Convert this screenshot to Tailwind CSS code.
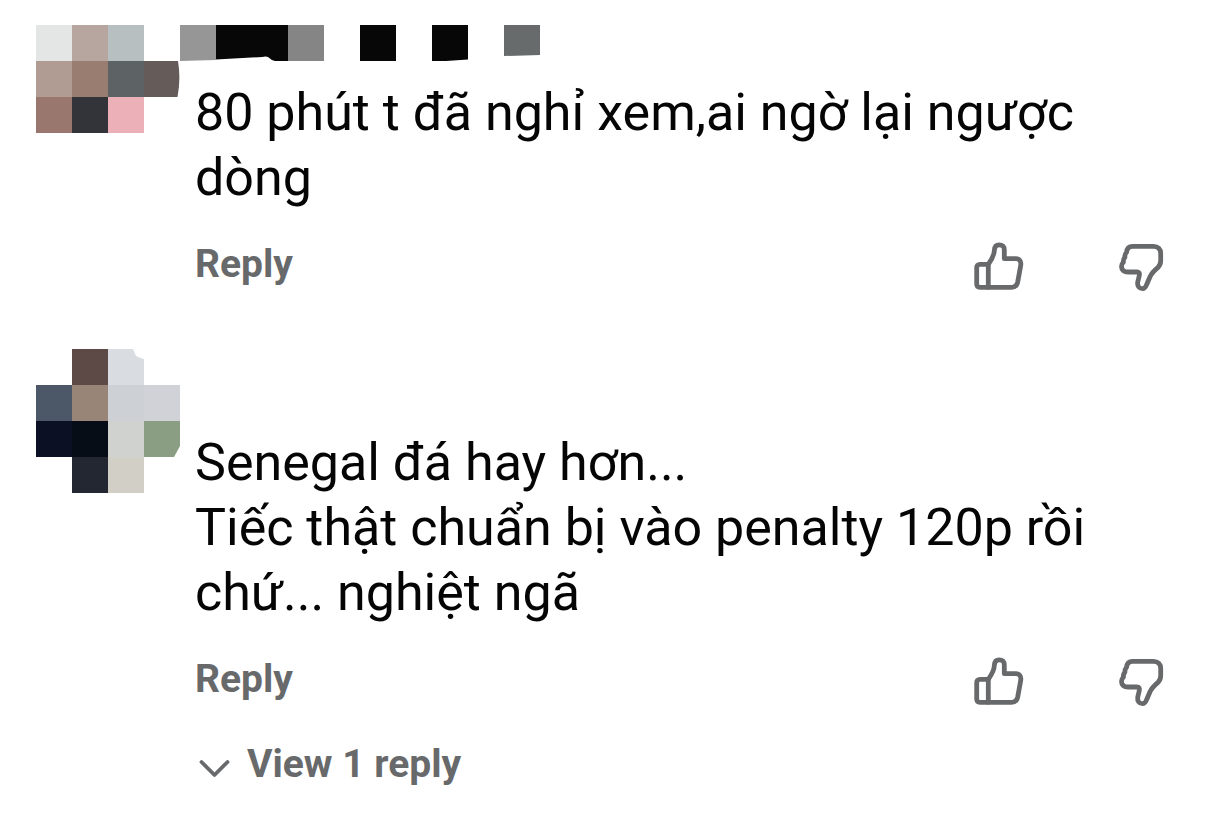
<!DOCTYPE html>
<html lang="vi">
<head>
  <meta charset="UTF-8" />
  <meta name="viewport" content="width=device-width, initial-scale=1" />
  <title>Comments</title>
  <script src="https://cdn.jsdelivr.net/npm/@tailwindcss/browser@4"></script>
</head>
<body class="bg-white font-['Roboto',sans-serif] text-[#050505]">
  <!-- shared icons -->
  <svg class="hidden">
    <symbol id="thumb-up" viewBox="0 0 52 52">
      <g fill="none" stroke="#67696b" stroke-width="4.8" stroke-linejoin="round" stroke-linecap="round">
        <path d="M16.3 23.3H8Q4.7 23.3 4.7 26.6V43Q4.7 46.3 8 46.3H39.5C43 46.3 45 44.3 45.7 41L48.7 24.500C49.400 20.500 47.500 17.700 44 17.700H32.300V9C32.300 5.500 30.300 3.800 27.200 3.800C24 3.800 22.600 5.800 22.400 9C22.200 15 19.800 18.500 16.300 23.300Z" />
        <path d="M16.3 23.3V46.3" />
      </g>
    </symbol>
    <symbol id="thumb-down" viewBox="0 0 52 52">
      <path fill="none" stroke="#67696b" stroke-width="4.8" stroke-linejoin="round" stroke-linecap="round" d="M16.500 5.300H37.500C42 5.300 44.700 8 44.700 12.500V19.500C44.700 22.500 44 24.600 42 26.400C38.500 29.400 35.800 32 34 35.700L30.700 43.500C29.500 46.600 28.400 47.700 26.500 47.700C23.200 47.700 21.200 45 21.700 41.200L23.300 34.500C23.800 32.200 23 31 21 31H12C8 31 5.500 29 5.500 25.500C5.500 23.800 6 22.500 7.400 21.300C7.200 19 7.600 17.500 8.900 16.200C8.700 14 9.300 12.600 10.500 11.400C10.900 7.500 13 5.300 16.500 5.300Z" />
    </symbol>
  </svg>

  <main class="pt-[25px] pr-[52px] pl-9">
    <article class="flex">
      <!-- avatar -->
      <svg class="size-36 shrink-0" viewBox="0 0 144 144">
        <g shape-rendering="crispEdges">
          <rect width="36" height="36" fill="#e3e6e4" />
          <rect x="36" width="36" height="36" fill="#b7a5a0" />
          <rect x="72" width="36" height="36" fill="#b7bfc1" />
          <rect y="36" width="36" height="36" fill="#b09c92" />
          <rect x="36" y="36" width="36" height="36" fill="#987d70" />
          <rect x="72" y="36" width="36" height="36" fill="#5d6265" />
          <rect y="72" width="36" height="36" fill="#99776f" />
          <rect x="36" y="72" width="36" height="36" fill="#333439" />
          <rect x="72" y="72" width="36" height="36" fill="#ecb0b8" />
        </g>
        <path d="M108 36H142Q145 54 141.500 72H108Z" fill="#655c5a" />
      </svg>
      <div class="min-w-0 flex-1">
        <!-- author name -->
        <svg class="h-9 w-[360px]" viewBox="0 0 360 36">
          <path d="M0 0H36V35L0 36Z" fill="#969696" />
          <path d="M36 0H108V36H95Q91 35 88 32Q86 31 82 32L36 34.500Z" fill="#070707" />
          <path d="M108 0H144V36H108Z" fill="#858585" />
          <path d="M180 0H216V36H180Z" fill="#070707" />
          <path d="M252 0H288V34.500L266 36H252Z" fill="#070707" />
          <path d="M324 0H360V30L324 31Z" fill="#676b6b" />
        </svg>
        <div class="pl-[15px]">
          <p class="mt-[19px] text-[52px] leading-[65px]">80 phút t đã nghỉ xem,ai ngờ lại ngược dòng</p>
          <div class="mt-[31px] flex items-start">
            <button class="mr-auto text-[39px] leading-[46px] font-bold text-[#67696b]">Reply</button>
            <button aria-label="Like" class="mr-[92px]"><svg class="size-[52px]"><use href="#thumb-up" /></svg></button>
            <button aria-label="Dislike"><svg class="size-[52px]"><use href="#thumb-down" /></svg></button>
          </div>
        </div>
      </div>
    </article>

    <article class="mt-14 flex">
      <!-- avatar -->
      <svg class="size-36 shrink-0" viewBox="0 0 144 144">
        <g shape-rendering="crispEdges">
          <rect x="36" width="36" height="36" fill="#5d4a46" />
          <rect y="36" width="36" height="36" fill="#4c5768" />
          <rect x="36" y="36" width="36" height="36" fill="#998577" />
          <rect x="72" y="36" width="36" height="36" fill="#cdd1d6" />
          <rect x="108" y="36" width="36" height="36" fill="#d0d2d8" />
          <rect y="72" width="36" height="36" fill="#0c1024" />
          <rect x="36" y="72" width="36" height="36" fill="#060d17" />
          <rect x="72" y="72" width="36" height="36" fill="#cfd2cf" />
          <rect x="36" y="108" width="36" height="36" fill="#232731" />
          <rect x="72" y="108" width="36" height="36" fill="#d1cfc6" />
        </g>
        <path d="M72 0H97L100 7Q104 9 108 10V36H72Z" fill="#d9dce1" />
        <path d="M108 72H144V97L138 108H108Z" fill="#8a9e83" />
      </svg>
      <div class="min-w-0 flex-1 pt-[81px] pl-[15px]">
        <p class="text-[52px] leading-[65px]">Senegal đá hay hơn...<br />Tiếc thật chuẩn bị vào penalty 120p rồi chứ... nghiệt ngã</p>
        <div class="mt-[31px] flex items-start">
          <button class="mr-auto text-[39px] leading-[46px] font-bold text-[#67696b]">Reply</button>
          <button aria-label="Like" class="mr-[92px]"><svg class="size-[52px]"><use href="#thumb-up" /></svg></button>
          <button aria-label="Dislike"><svg class="size-[52px]"><use href="#thumb-down" /></svg></button>
        </div>
        <button class="mt-[33px] flex items-center gap-3 text-[39px] leading-[46px] font-bold text-[#67696b]">
          <svg class="h-[46px] w-10" viewBox="0 0 40 46" fill="none" stroke="#67696b" stroke-width="3.800" stroke-linecap="round" stroke-linejoin="round">
            <path d="M6.500 21L19.500 34L32.500 21" />
          </svg>
          View 1 reply
        </button>
      </div>
    </article>
  </main>
</body>
</html>
